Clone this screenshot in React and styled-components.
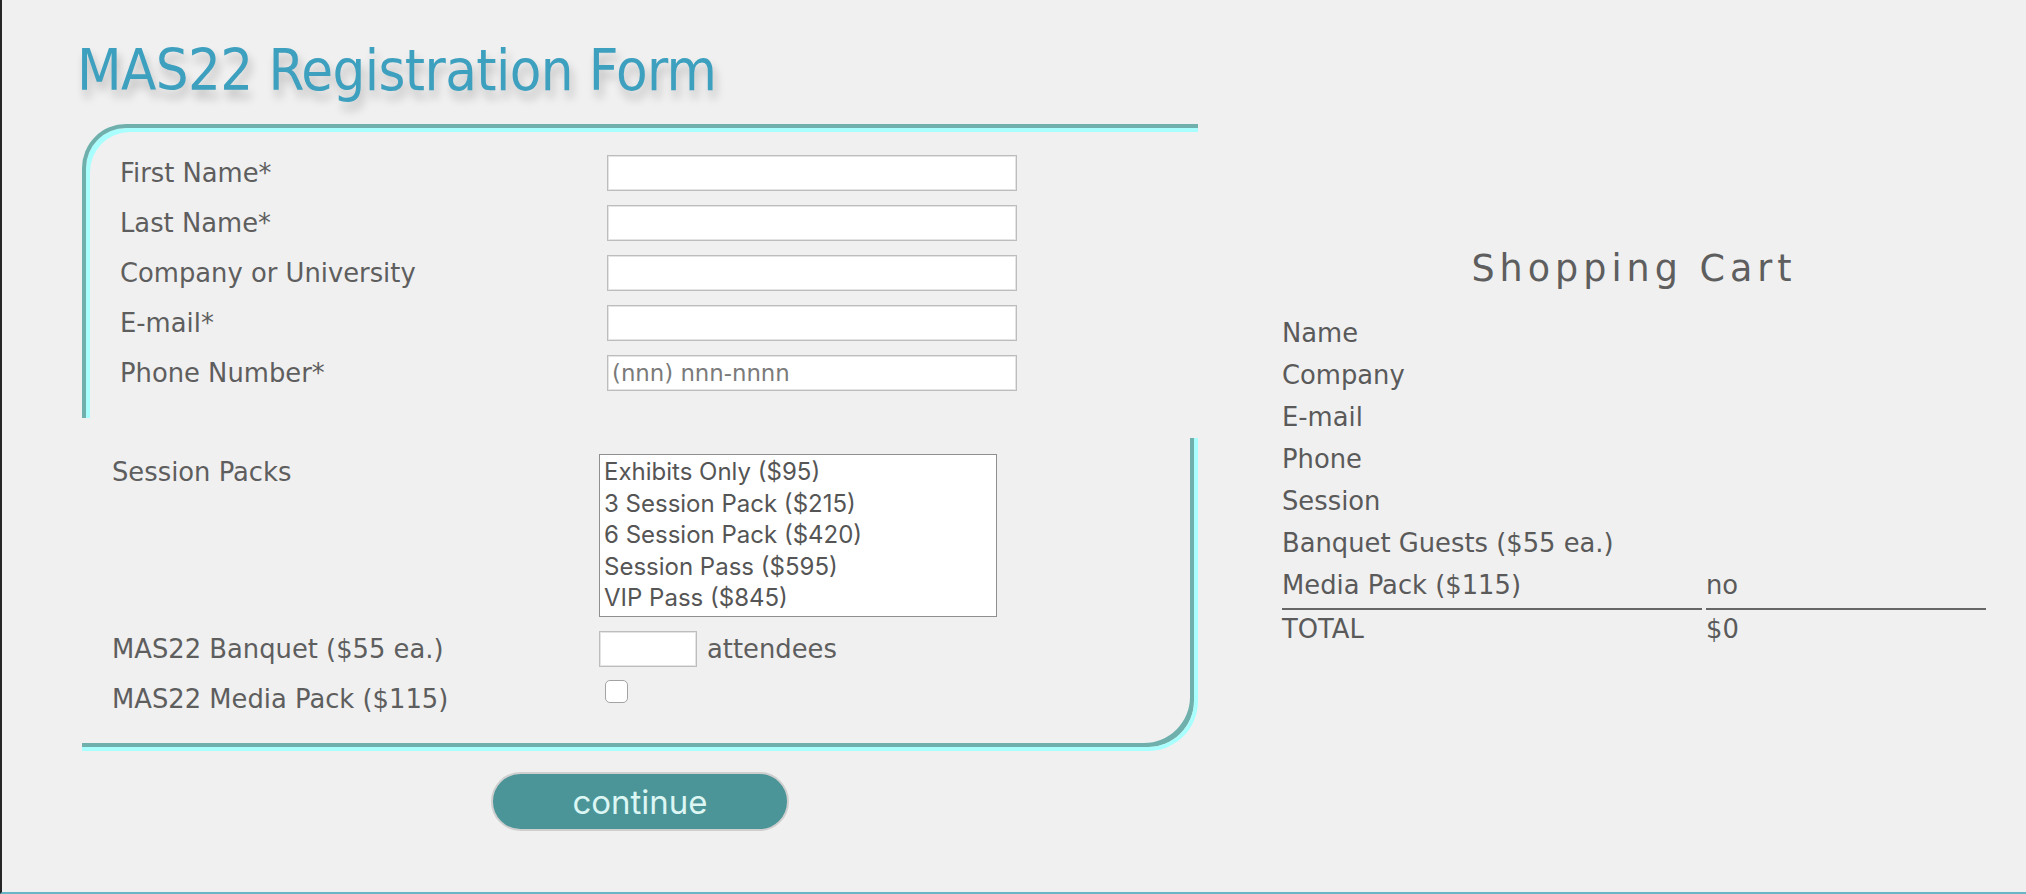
import React from "react";
import styled, { createGlobalStyle } from "styled-components";

const GlobalStyle = createGlobalStyle`
  html, body {
    margin: 0;
    padding: 0;
    background: #f0f0f0;
  }
  body {
    font-family: "DejaVu Sans", Verdana, sans-serif;
    color: #5e5e5e;
  }
`;

const Page = styled.div`
  box-sizing: border-box;
  min-height: 100vh;
  border-left: 2px solid #262626;
  border-bottom: 2px solid #67b5c5;
  display: flex;
  align-items: flex-start;
  padding: 38px 0 0 80px;
`;

const FormColumn = styled.div`
  width: 1116px;
  display: flex;
  flex-direction: column;
`;

const Title = styled.h1`
  margin: 0 0 20px -5px;
  font-family: "DejaVu Sans Condensed", "DejaVu Sans", sans-serif;
  font-stretch: condensed;
  font-weight: normal;
  font-size: 57.5px;
  line-height: 66px;
  letter-spacing: -0.6px;
  color: #3ea0bf;
  text-shadow: 3px 8px 10px rgba(0, 0, 0, 0.22);
`;

const TopPanel = styled.div`
  box-sizing: border-box;
  border-top: 4px solid #6fb0ad;
  border-left: 4px solid #6fb0ad;
  border-top-left-radius: 44px;
  box-shadow: inset 4px 4px 0 #a9fffe;
  padding: 27px 0 27px 34px;
  display: flex;
  flex-direction: column;
  gap: 14px;
`;

const BottomPanel = styled.div`
  box-sizing: border-box;
  margin-top: 20px;
  border-right: 4px solid #a9fffe;
  border-bottom: 4px solid #a9fffe;
  border-bottom-right-radius: 50px;
  box-shadow: inset -4px -4px 0 #6fb0ad;
  padding: 16px 0 30px 30px;
  display: flex;
  flex-direction: column;
  gap: 14px;
`;

const Row = styled.div`
  display: grid;
  grid-template-columns: 487px auto;
  align-items: ${(p) => (p.$top ? "start" : "center")};
`;

const Label = styled.label`
  font-size: 25.8px;
  line-height: 36px;
  color: #5e5e5e;
`;

const TextField = styled.input`
  box-sizing: border-box;
  width: ${(p) => p.$width || 410}px;
  height: 36px;
  margin: 0;
  padding: 0 4px;
  border: 1px solid #bdbdbd;
  box-shadow: inset 0 0 0 1px #e4e4e4;
  background: #fff;
  font-family: "DejaVu Sans", Verdana, sans-serif;
  font-size: 22.8px;
  color: #444;
  outline: none;
  &::placeholder {
    color: #7a7a7a;
  }
`;

const ListBox = styled.div`
  box-sizing: border-box;
  width: 398px;
  height: 163px;
  padding: 1px 4px;
  border: 1px solid #8f8f8f;
  background: #fff;
`;

const Option = styled.div`
  font-family: Inter, "Noto Sans", sans-serif;
  font-size: 24px;
  line-height: 31.6px;
  color: #555;
  white-space: nowrap;
`;

const Inline = styled.div`
  display: flex;
  align-items: center;
  gap: 10px;
`;

const Check = styled.input`
  appearance: none;
  align-self: start;
  box-sizing: border-box;
  width: 23px;
  height: 23px;
  margin: -1px 0 0 6px;
  border: 1px solid #a3a3a3;
  border-radius: 5px;
  background: #fff;
`;

const ContinueButton = styled.button`
  align-self: center;
  margin-top: 21px;
  box-sizing: border-box;
  width: 298px;
  height: 59px;
  padding: 0;
  border: 2px solid #cfcfcf;
  border-radius: 30px;
  background: #4b9598;
  color: #dcf6f4;
  font-family: Inter, "Noto Sans", sans-serif;
  font-size: 33px;
`;

const CartColumn = styled.div`
  width: 704px;
  margin-left: 84px;
  padding-top: 209px;
`;

const CartTitle = styled.h2`
  margin: 0 0 21px;
  text-align: center;
  font-weight: normal;
  font-size: 36.5px;
  line-height: 44px;
  letter-spacing: 5px;
  color: #5e5e5e;
`;

const CartGrid = styled.div`
  display: grid;
  grid-template-columns: 420px 280px;
  column-gap: 4px;
`;

const Cell = styled.div`
  font-size: 25.8px;
  line-height: ${(p) => (p.$short ? 38 : 42)}px;
  color: #5a5a5a;
  white-space: nowrap;
  ${(p) =>
    p.$rule &&
    `
    padding-bottom: 2px;
    border-bottom: 2px solid #666;
  `}
`;

const contactFields = [
  { label: "First Name*" },
  { label: "Last Name*" },
  { label: "Company or University" },
  { label: "E-mail*" },
  { label: "Phone Number*", placeholder: "(nnn) nnn-nnnn" },
];

const sessions = [
  "Exhibits Only ($95)",
  "3 Session Pack ($215)",
  "6 Session Pack ($420)",
  "Session Pass ($595)",
  "VIP Pass ($845)",
];

const cartRows = [
  ["Name", ""],
  ["Company", ""],
  ["E-mail", ""],
  ["Phone", ""],
  ["Session", ""],
  ["Banquet Guests ($55 ea.)", ""],
  ["Media Pack ($115)", "no", "rule"],
  ["TOTAL", "$0", "short"],
];

const App = () => {
  return (
    <>
      <GlobalStyle />
      <Page>
        <FormColumn>
          <Title>MAS22 Registration Form</Title>
          <TopPanel>
            {contactFields.map((f) => (
              <Row key={f.label}>
                <Label>{f.label}</Label>
                <TextField type="text" placeholder={f.placeholder} />
              </Row>
            ))}
          </TopPanel>
          <BottomPanel>
            <Row $top>
              <Label>Session Packs</Label>
              <ListBox>
                {sessions.map((s) => (
                  <Option key={s}>{s}</Option>
                ))}
              </ListBox>
            </Row>
            <Row>
              <Label>MAS22 Banquet ($55 ea.)</Label>
              <Inline>
                <TextField type="text" $width={98} />
                <Label>attendees</Label>
              </Inline>
            </Row>
            <Row>
              <Label>MAS22 Media Pack ($115)</Label>
              <Check type="checkbox" />
            </Row>
          </BottomPanel>
          <ContinueButton type="button">continue</ContinueButton>
        </FormColumn>
        <CartColumn>
          <CartTitle>Shopping Cart</CartTitle>
          <CartGrid>
            {cartRows.map(([name, value, kind]) => (
              <React.Fragment key={name}>
                <Cell $rule={kind === "rule"} $short={kind === "short"}>
                  {name}
                </Cell>
                <Cell $rule={kind === "rule"} $short={kind === "short"}>
                  {value}
                </Cell>
              </React.Fragment>
            ))}
          </CartGrid>
        </CartColumn>
      </Page>
    </>
  );
};

export default App;
